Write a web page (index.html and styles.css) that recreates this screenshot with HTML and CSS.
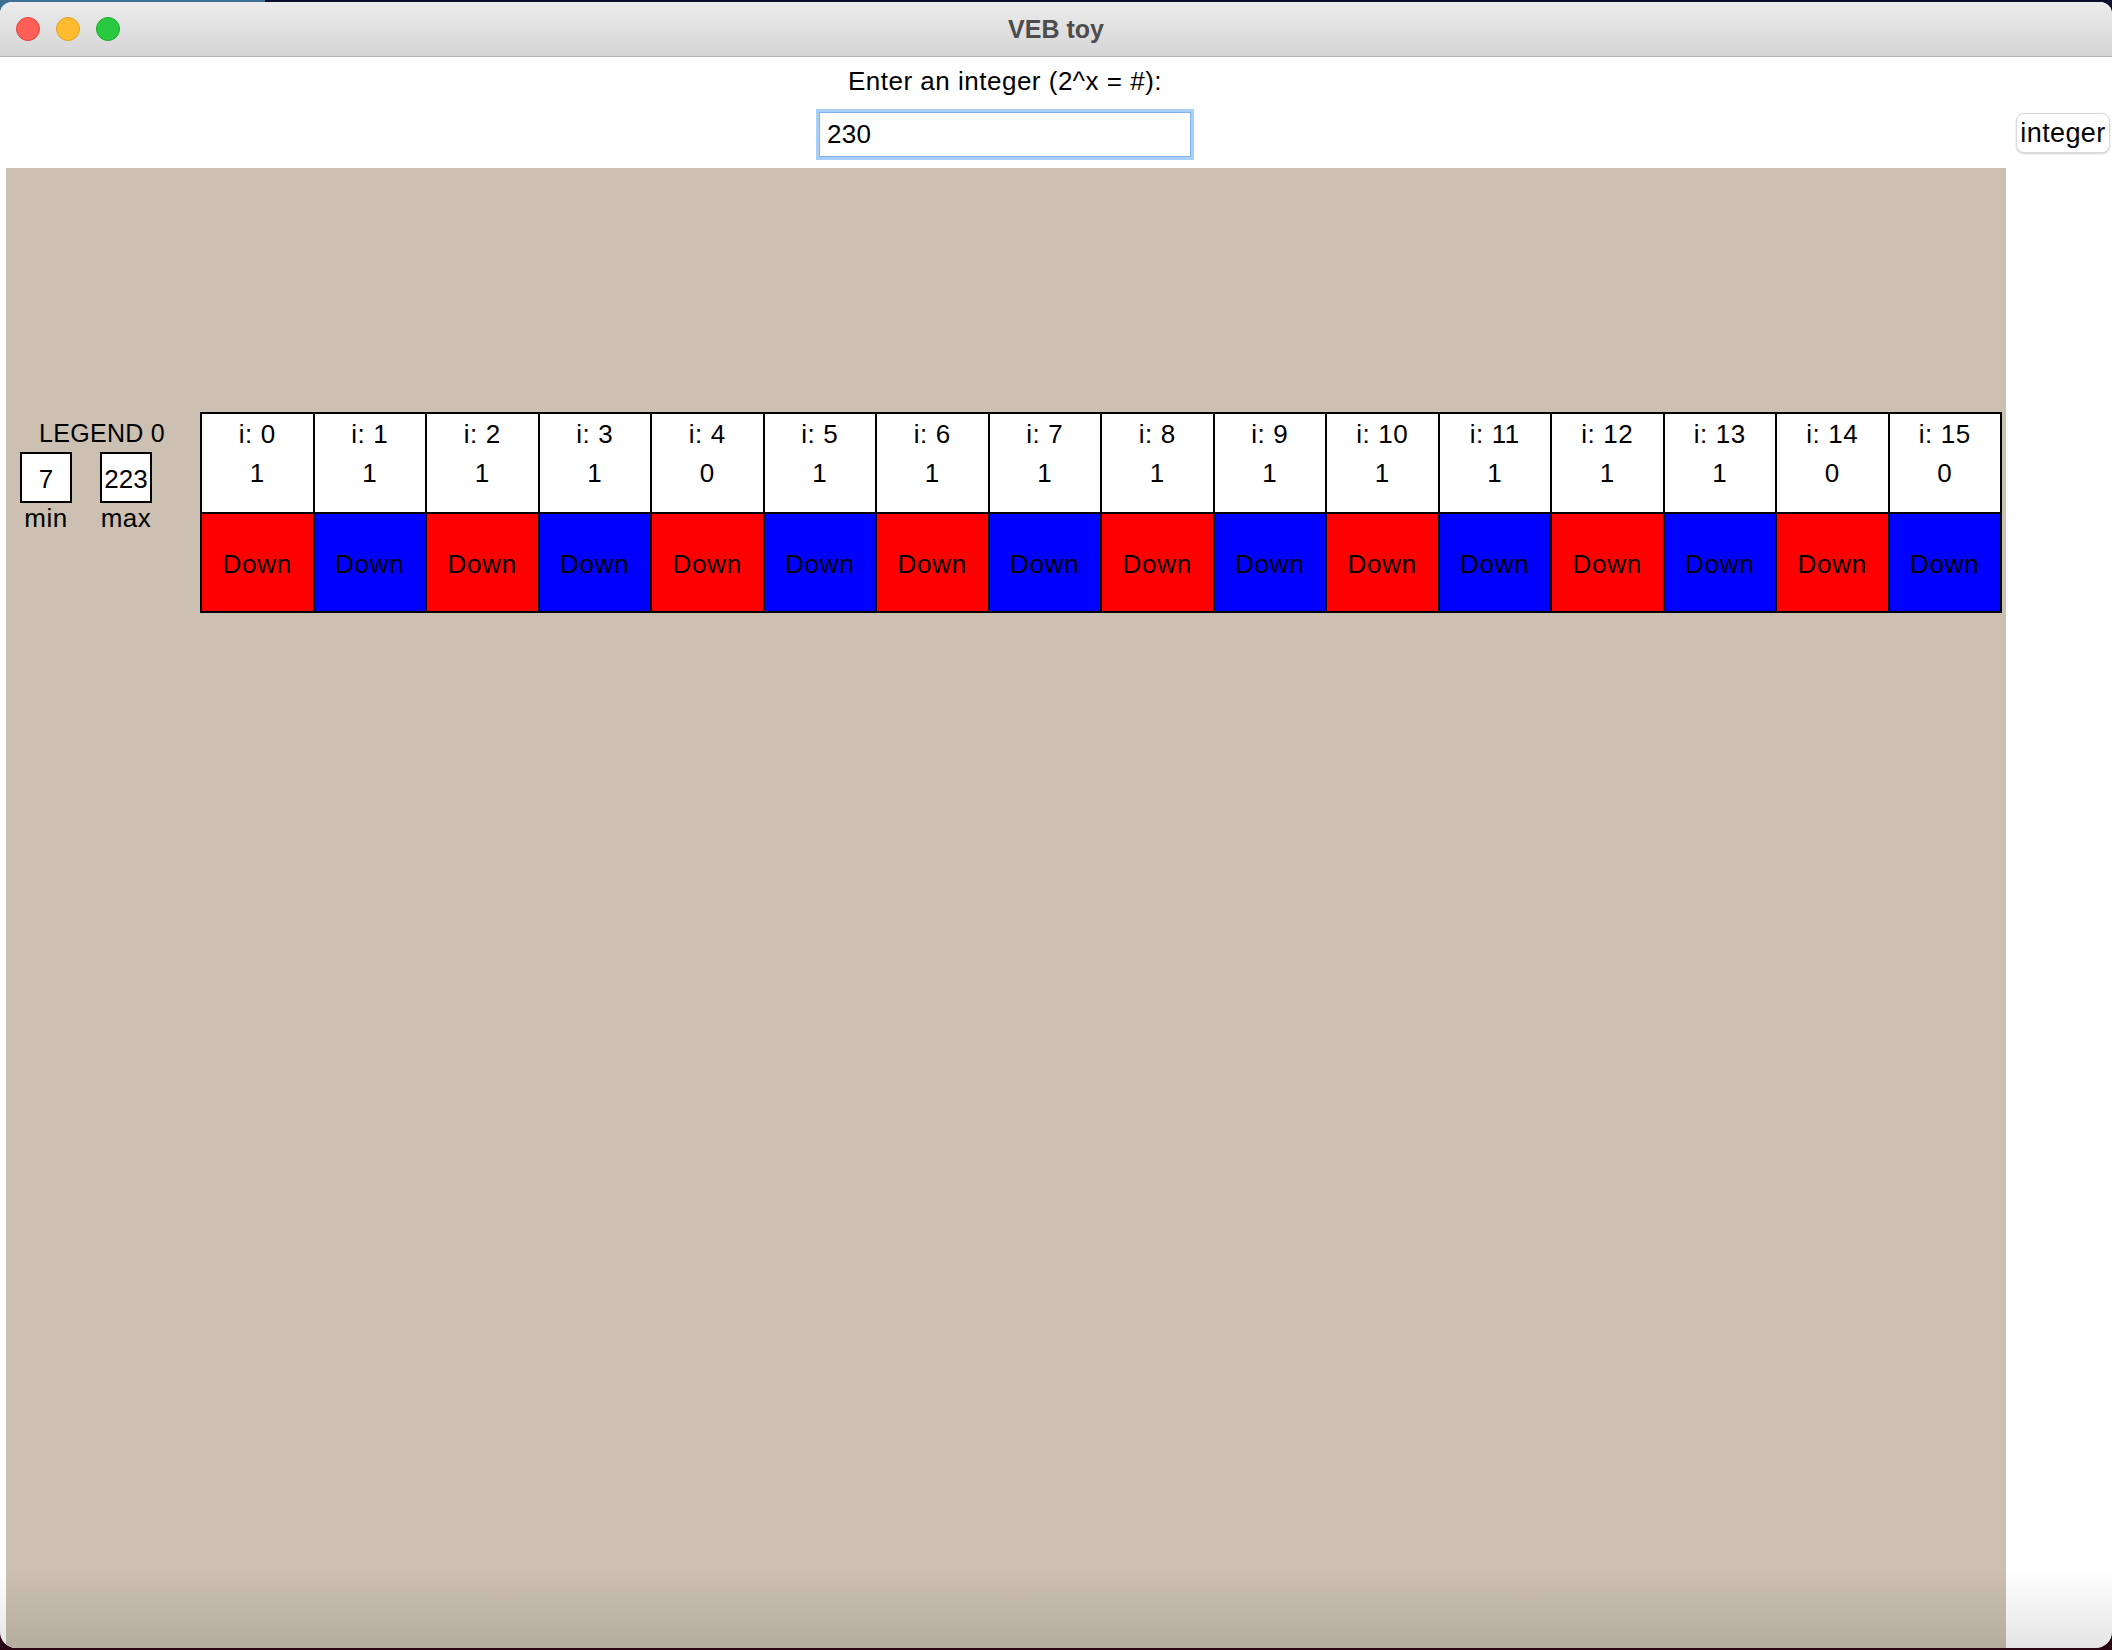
FILE: index.html
```html
<!DOCTYPE html>
<html>
<head>
<meta charset="utf-8">
<title>VEB toy</title>
<link rel="stylesheet" href="styles.css">
</head>
<body>
<div class="window">
  <div class="titlebar">
    <div class="lights">
      <span class="light red"></span>
      <span class="light yellow"></span>
      <span class="light green"></span>
    </div>
    <div class="title">VEB toy</div>
    <div class="spacer"></div>
  </div>
  <div class="content">
    <div class="formrow">
      <div class="form">
        <label class="prompt" for="num">Enter an integer (2^x = #):</label>
        <input id="num" class="numinput" type="text" value="230">
      </div>
      <button class="intbtn">integer</button>
    </div>
    <div class="canvas">
      <div class="legend">
        <div class="legend-title">LEGEND 0</div>
        <div class="legend-boxes">
          <div class="legend-item">
            <div class="legend-box">7</div>
            <div class="legend-label">min</div>
          </div>
          <div class="legend-item">
            <div class="legend-box">223</div>
            <div class="legend-label">max</div>
          </div>
        </div>
      </div>
      <div class="grid">
        <div class="col"><div class="top"><div>i: 0</div><div class="val">1</div></div><div class="down red-bg">Down</div></div>
        <div class="col"><div class="top"><div>i: 1</div><div class="val">1</div></div><div class="down blue-bg">Down</div></div>
        <div class="col"><div class="top"><div>i: 2</div><div class="val">1</div></div><div class="down red-bg">Down</div></div>
        <div class="col"><div class="top"><div>i: 3</div><div class="val">1</div></div><div class="down blue-bg">Down</div></div>
        <div class="col"><div class="top"><div>i: 4</div><div class="val">0</div></div><div class="down red-bg">Down</div></div>
        <div class="col"><div class="top"><div>i: 5</div><div class="val">1</div></div><div class="down blue-bg">Down</div></div>
        <div class="col"><div class="top"><div>i: 6</div><div class="val">1</div></div><div class="down red-bg">Down</div></div>
        <div class="col"><div class="top"><div>i: 7</div><div class="val">1</div></div><div class="down blue-bg">Down</div></div>
        <div class="col"><div class="top"><div>i: 8</div><div class="val">1</div></div><div class="down red-bg">Down</div></div>
        <div class="col"><div class="top"><div>i: 9</div><div class="val">1</div></div><div class="down blue-bg">Down</div></div>
        <div class="col"><div class="top"><div>i: 10</div><div class="val">1</div></div><div class="down red-bg">Down</div></div>
        <div class="col"><div class="top"><div>i: 11</div><div class="val">1</div></div><div class="down blue-bg">Down</div></div>
        <div class="col"><div class="top"><div>i: 12</div><div class="val">1</div></div><div class="down red-bg">Down</div></div>
        <div class="col"><div class="top"><div>i: 13</div><div class="val">1</div></div><div class="down blue-bg">Down</div></div>
        <div class="col"><div class="top"><div>i: 14</div><div class="val">0</div></div><div class="down red-bg">Down</div></div>
        <div class="col"><div class="top"><div>i: 15</div><div class="val">0</div></div><div class="down blue-bg">Down</div></div>
      </div>
    </div>
    <div class="bottomshade"></div>
  </div>
</div>
</body>
</html>
```

FILE: styles.css
```css
html, body {
  margin: 0;
  padding: 0;
}

body {
  width: 2112px;
  height: 1650px;
  overflow: hidden;
  background:
    linear-gradient(to right, #3f6f92 0, #3f6f92 265px, #0d0e2c 265px) top / 100% 20px no-repeat,
    #2a0712;
  font-family: "Liberation Sans", Arial, sans-serif;
  color: #000;
}

.window {
  margin-top: 2px;
  width: 2112px;
  height: 1646px;
  border-radius: 12px 12px 16px 16px;
  overflow: hidden;
  background: #fff;
  display: flex;
  flex-direction: column;
}

/* title bar */
.titlebar {
  height: 54px;
  flex: none;
  border-bottom: 1px solid #b3b3b3;
  background: linear-gradient(to bottom, #ececec, #d5d5d5);
  display: grid;
  grid-template-columns: 1fr auto 1fr;
  align-items: center;
}

.lights {
  display: flex;
  gap: 16px;
  padding-left: 16px;
}

.light {
  width: 22px;
  height: 22px;
  border-radius: 50%;
  border: 1px solid transparent;
}

.light.red { background: #ff5f57; border-color: #e0443e; }
.light.yellow { background: #febc2e; border-color: #dea123; }
.light.green { background: #28c840; border-color: #1aab29; }

.title {
  font-weight: bold;
  font-size: 25px;
  color: #4d4d4d;
  padding-top: 1px;
}

/* content */
.content {
  flex: 1;
  position: relative;
  display: flex;
  flex-direction: column;
}

.formrow {
  height: 111px;
  flex: none;
  display: flex;
}

.form {
  flex: 1;
  padding-right: 6px;
  display: flex;
  flex-direction: column;
  align-items: center;
  padding-top: 9px;
}

.prompt {
  font-size: 26px;
  line-height: 30px;
  letter-spacing: 0.5px;
}

.numinput {
  margin-top: 16px;
  box-sizing: border-box;
  width: 372px;
  height: 45px;
  border: 1px solid #7fb1ea;
  box-shadow: 0 0 0 3px #a8cff7;
  outline: none;
  padding: 0 0 0 7px;
  font-family: "Liberation Sans", Arial, sans-serif;
  font-size: 26px;
  letter-spacing: 0.3px;
  color: #000;
  background: #fff;
}

.intbtn {
  align-self: flex-start;
  margin-top: 56px;
  margin-right: 2px;
  box-sizing: border-box;
  width: 94px;
  height: 40px;
  padding: 0;
  border: 1px solid #d9d9d9;
  border-radius: 8px;
  background: #fff;
  box-shadow: 0 1px 2px rgba(0, 0, 0, 0.18);
  font-family: "Liberation Sans", Arial, sans-serif;
  font-size: 27px;
  letter-spacing: 0.4px;
  color: #000;
  line-height: 38px;
}

/* canvas */
.canvas {
  margin-left: 6px;
  width: 2000px;
  flex: 1;
  background: #cbc0b1;
  display: flex;
  align-items: flex-start;
  padding-top: 244px;
  padding-left: 14px;
  box-sizing: border-box;
}

.legend {
  width: 180px;
  flex: none;
  margin-top: 6px;
}

.legend-title {
  font-size: 25px;
  line-height: 30px;
  padding-left: 19px;
  letter-spacing: 0.3px;
}

.legend-boxes {
  display: flex;
  gap: 28px;
  margin-top: 4px;
}

.legend-item {
  width: 52px;
  display: flex;
  flex-direction: column;
  align-items: center;
}

.legend-box {
  box-sizing: border-box;
  width: 52px;
  height: 51px;
  border: 2px solid #000;
  background: #fff;
  display: flex;
  align-items: center;
  justify-content: center;
  font-size: 26px;
  padding-top: 4px;
}

.legend-label {
  font-size: 26px;
  line-height: 26px;
  margin-top: 2px;
  letter-spacing: 0.5px;
}

.grid {
  width: 1802px;
  flex: none;
  display: grid;
  grid-template-columns: repeat(16, 1fr);
  border-top: 2px solid #000;
  border-left: 2px solid #000;
  box-sizing: border-box;
}

.col {
  display: flex;
  flex-direction: column;
  border-right: 2px solid #000;
}

.top {
  height: 100px;
  border-bottom: 2px solid #000;
  background: #fff;
  text-align: center;
  font-size: 26px;
  line-height: 30px;
  letter-spacing: 0.6px;
  padding-top: 5px;
  box-sizing: border-box;
}

.top .val {
  margin-top: 9px;
}

.down {
  height: 99px;
  box-sizing: border-box;
  border-bottom: 2px solid #000;
  display: flex;
  align-items: center;
  justify-content: center;
  font-size: 26px;
  letter-spacing: 0.8px;
  padding-top: 4px;
}

.red-bg { background: #ff0000; }
.blue-bg { background: #0000ff; }

.bottomshade {
  position: absolute;
  left: 0;
  right: 0;
  bottom: 0;
  height: 80px;
  background: linear-gradient(to bottom, rgba(0, 0, 0, 0), rgba(0, 0, 0, 0.1));
  pointer-events: none;
}
```
